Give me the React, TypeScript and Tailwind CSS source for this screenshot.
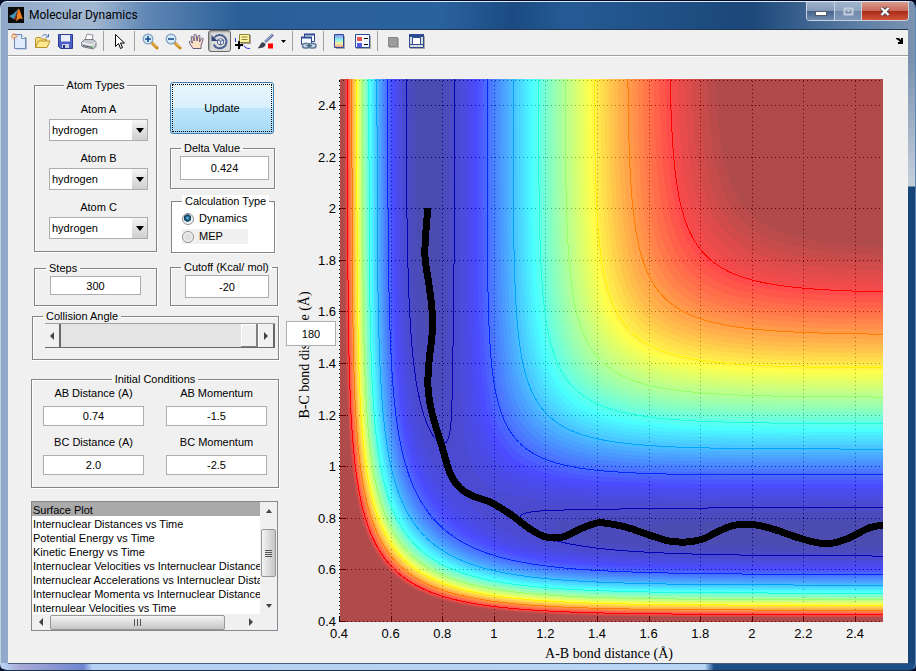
import React, { useMemo } from "react";

/* ---------- potential energy surface (LEPS, collinear H + H2) ---------- */

const DE = 109.4;
const BETA = 1.942;
const RE = 0.7417;
const SATO = 0.185;
const R_MIN = 0.4;
const UNIT = 258;
const SIZE = 543;
const V_LOW = -109.6;
const V_HIGH = -21.5;

function pair(r: number): [number, number] {
  const e = Math.exp(-BETA * (r - RE));
  const e2 = e * e;
  const q = (DE / 4) * ((3 + SATO) * e2 - (2 + 6 * SATO) * e);
  const j = (DE / 4) * ((1 + 3 * SATO) * e2 - (6 + 2 * SATO) * e);
  return [q, j];
}

function energy(ab: number, bc: number): number {
  const [q1, j1] = pair(ab);
  const [q2, j2] = pair(bc);
  const [q3, j3] = pair(ab + bc);
  const root = Math.sqrt(((j1 - j2) ** 2 + (j2 - j3) ** 2 + (j1 - j3) ** 2) / 2);
  return (q1 + q2 + q3 - root) / (1 + SATO);
}

type Pt = [number, number];

/* The surface is symmetric in its two bonds, so only BC >= AB is traced. */
const STEP = 2;
const ROWS: { d: number; v: number[] }[] = [];
for (let d = SIZE + 1; d >= 0; d -= STEP) {
  const v: number[] = [];
  for (let c = 0; c <= d + STEP; c += STEP) {
    v.push(energy(R_MIN + c / UNIT, R_MIN + d / UNIT));
  }
  ROWS.push({ d, v });
}

function trace(level: number): { left: Pt[]; right: Pt[]; closed: boolean } {
  const left: Pt[] = [];
  const right: Pt[] = [];
  let closed = false;
  for (const { d, v } of ROWS) {
    const a = v.findIndex((x) => x < level);
    if (a < 0) {
      closed = left.length > 0 && left[left.length - 1][0] < d - 4;
      break;
    }
    let b = v.length - 1;
    while (b > a && v[b] >= level) b--;
    const lo = a === 0 ? 0 : (a - 1 + (v[a - 1] - level) / (v[a - 1] - v[a])) * STEP;
    const hi = b === v.length - 1 ? d + STEP : (b + (level - v[b]) / (v[b + 1] - v[b])) * STEP;
    if (lo > d + STEP) break;
    left.push([lo, d]);
    right.push([Math.min(hi, d + STEP), d]);
  }
  return { left, right, closed };
}

const upper = ([x, y]: Pt) => `${x.toFixed(1)} ${(SIZE - y).toFixed(1)}`;
const lower = ([x, y]: Pt) => `${y.toFixed(1)} ${(SIZE - x).toFixed(1)}`;

/* The mirrored half runs the other way round so that the halves' overlap stays filled. */
function areaPath(level: number): string {
  const { left, right } = trace(level);
  if (left.length < 2) return "";
  const ring = [...left, ...right.slice().reverse()];
  const mirrored = ring.slice().reverse();
  return `M${ring.map(upper).join("L")}ZM${mirrored.map(lower).join("L")}Z`;
}

function linePath(level: number): string {
  const { left, right, closed } = trace(level);
  const onCanvas = (pts: Pt[]) => pts.filter(([x, y]) => x <= y + 1);
  const lines = closed ? [[...left, ...right.slice().reverse()]] : [onCanvas(left), onCanvas(right)];
  return lines
    .filter((l) => l.length > 1)
    .map((l) => `M${l.map(upper).join("L")}M${l.map(lower).join("L")}`)
    .join("");
}

function jet(i: number): string {
  const u = (j: number) => (j < 1 || j > 47 ? 0 : j <= 16 ? j / 16 : j <= 31 ? 1 : (48 - j) / 16);
  const c = (x: number) => Math.round(x * 255);
  return `rgb(${c(u(i - 24))},${c(u(i - 8))},${c(u(i + 8))})`;
}

const CONTOURS: [number, string][] = [
  [-105.7, "#0000b4"],
  [-95.3, "#0028ff"],
  [-85, "#00a5ff"],
  [-74.6, "#1effe1"],
  [-64.2, "#96ff69"],
  [-53.8, "#fff000"],
  [-43.4, "#ff7d00"],
  [-32.8, "#ff0000"],
];

const TRAJECTORY: Pt[] = [
  [428, 208], [426, 230], [425, 257], [429, 285], [432, 310], [432, 335], [429, 362], [428, 387],
  [432, 413], [441, 443], [450, 473], [460, 488], [473, 496], [490, 502], [510, 514], [530, 529],
  [546, 537], [563, 537], [580, 529], [597, 523], [611, 524], [629, 528], [649, 535], [669, 541],
  [686, 542], [703, 539], [719, 531], [736, 525], [756, 525], [776, 530], [799, 538], [819, 543],
  [833, 543], [849, 538], [869, 528], [884, 525],
];

function smooth(p: Pt[]): string {
  let d = `M${p[0][0]} ${p[0][1]}`;
  for (let i = 0; i < p.length - 1; i++) {
    const a = p[i - 1] ?? p[i];
    const b = p[i];
    const c = p[i + 1];
    const e = p[i + 2] ?? c;
    d += `C${b[0] + (c[0] - a[0]) / 6} ${b[1] + (c[1] - a[1]) / 6} ${c[0] - (e[0] - b[0]) / 6} ${c[1] - (e[1] - b[1]) / 6} ${c[0]} ${c[1]}`;
  }
  return d;
}

const TICKS = ["0.4", "0.6", "0.8", "1", "1.2", "1.4", "1.6", "1.8", "2", "2.2", "2.4"];

function Chart() {
  const bands = useMemo(() => {
    const out: { d: string; fill: string }[] = [];
    for (let i = 62; i >= 1; i--) {
      out.push({ d: areaPath(V_LOW + ((V_HIGH - V_LOW) * i) / 64), fill: jet(i) });
    }
    return out;
  }, []);
  const lines = useMemo(() => CONTOURS.map(([v, stroke]) => ({ d: linePath(v), stroke })), []);
  return (
    <svg viewBox="290 57 618 606" preserveAspectRatio="xMinYMin meet" className="block h-full w-full" role="img" aria-label="Surface Plot">
      <defs>
        <clipPath id="plot">
          <rect x="340" y="79" width="543" height="543" />
        </clipPath>
      </defs>
      <rect x="340" y="79" width="543" height="543" fill="#fff" />
      <g stroke="#000" strokeDasharray="1 3" shapeRendering="crispEdges">
        {TICKS.map((t, i) => {
          const o = Math.round(i * 51.6);
          return (
            <g key={t}>
              <path d={`M${339.5 + o} 622V79`} />
              <path d={`M339 ${621.5 - o}H883`} />
              <path d={`M${339.5 + o} 622v-6M340 ${621.5 - o}h6`} strokeDasharray="none" />
            </g>
          );
        })}
        <path d="M339 80.5H883" />
      </g>
      <g clipPath="url(#plot)">
        <g opacity="0.7">
          <rect x="340" y="79" width="543" height="543" fill={jet(63)} />
          <g transform="translate(340 79)">
            {bands.map((b) => (
              <path key={b.fill} d={b.d} fill={b.fill} />
            ))}
          </g>
        </g>
        <g transform="translate(340 79)" fill="none" shapeRendering="crispEdges">
          {lines.map((l) => (
            <path key={l.stroke} d={l.d} stroke={l.stroke} />
          ))}
        </g>
        <path d={smooth(TRAJECTORY)} fill="none" stroke="#000" strokeWidth="7" shapeRendering="crispEdges" />
      </g>
      <g className="font-['Liberation_Sans',sans-serif] text-[13px]">
        {TICKS.map((t, i) => (
          <text key={t} x={339 + i * 51.6} y="638" textAnchor="middle">{t}</text>
        ))}
        {TICKS.map((t, i) => (
          <text key={t} x="336" y={626 - i * 51.6} textAnchor="end">{t}</text>
        ))}
      </g>
      <g className="font-['Liberation_Serif',serif] text-[14px]">
        <text x="609" y="658" textAnchor="middle">A-B bond distance (Å)</text>
        <text transform="translate(309 355) rotate(-90)" textAnchor="middle">B-C bond distance (Å)</text>
      </g>
    </svg>
  );
}

/* ------------------------------- icons -------------------------------- */

const I = ({ children }: { children: React.ReactNode }) => (
  <svg width="17" height="17" viewBox="0 0 17 17" aria-hidden="true">{children}</svg>
);

const icons: Record<string, React.ReactNode> = {
  "New Figure": (
    <I>
      <path d="M4 4h12v12.500H5z" fill="#b0b8c4" />
      <path d="M3.500 1.500h7l4 4v10h-11z" fill="#dfeafa" stroke="#6a8cc0" />
      <path d="M10.500 1.500v4h4" fill="#fff" stroke="#6a8cc0" />
      <path d="M3 0v6.500M0 3.200h6.500M.9 1l4.400 4.500M5.300 1L.9 5.500" stroke="#e0713b" />
      <circle cx="3.100" cy="3.200" r="1.300" fill="#fff3c0" />
    </I>
  ),
  "Open File": (
    <I>
      <path d="M1.500 14.500v-9l1-1h4l1 1.500h5v3" fill="#f6da7c" stroke="#b9922a" />
      <path d="M1.500 14.500l3-6.500h11.500l-3 6.500z" fill="#ffe98f" stroke="#b9922a" />
      <path d="M8 3.500c1.500-2.500 4.500-2.500 6 0M14.500 1v3h-3" fill="none" stroke="#4b78b8" />
    </I>
  ),
  "Save Figure": (
    <I>
      <path d="M1.500 1.500h14v14h-12l-2-2z" fill="#4b5fc6" stroke="#2c3c92" />
      <path d="M4 2h9v6.500H4z" fill="#e9eefc" />
      <path d="M5 11h7v4H5z" fill="#c9cfe6" />
      <path d="M6 12h2v3H6z" fill="#20307f" />
    </I>
  ),
  "Print Figure": (
    <I>
      <path d="M5 7l2-6 6 1-1 5.500z" fill="#fff" stroke="#8d9299" />
      <path d="M1.500 9.500l3-3h9l2.500 3v4l-3 2.500-11-2.500z" fill="#c6cad0" stroke="#767b83" />
      <path d="M2 10l10 2 3.500-2.500" fill="none" stroke="#fff" />
      <path d="M3 12.500l9 2" stroke="#50545b" />
      <path d="M11 14h2" stroke="#58b058" />
    </I>
  ),
  "Edit Plot": (
    <I>
      <path d="M4.500 1.500v12l3-3 2 5 2-1-2-4.500h4z" fill="#fff" stroke="#000" />
    </I>
  ),
  "Zoom In": (
    <I>
      <path d="M10 10l5 5" stroke="#c98a1c" strokeWidth="3" strokeLinecap="round" />
      <path d="M10.500 10l4 4" stroke="#ffd36b" />
      <circle cx="6" cy="6" r="4.800" fill="#d5ecfa" stroke="#8aa4c6" strokeWidth="1.400" />
      <path d="M6 3v6M3 6h6" stroke="#174a8c" strokeWidth="1.600" />
    </I>
  ),
  "Zoom Out": (
    <I>
      <path d="M10 10l5 5" stroke="#c98a1c" strokeWidth="3" strokeLinecap="round" />
      <path d="M10.500 10l4 4" stroke="#ffd36b" />
      <circle cx="6" cy="6" r="4.800" fill="#d5ecfa" stroke="#8aa4c6" strokeWidth="1.400" />
      <path d="M3 6h6" stroke="#174a8c" strokeWidth="1.600" />
    </I>
  ),
  Pan: (
    <I>
      <path d="M5 15.500L1.500 10c-1-2 1-2.500 2-1l1 1.200L3 4.500c0-1.500 1.700-1.500 2 0L6.200 8 6 2.500c0-1.500 2-1.500 2.200 0L9 8l1-4.800c.3-1.400 2-1.200 1.900.3L11.500 9l1.800-3.300c.7-1.200 2.200-.5 1.700.9L13 12.500v3z" fill="#fce0c4" stroke="#5b4a78" strokeWidth=".9" />
    </I>
  ),
  "Rotate 3D": (
    <I>
      <path d="M3.500 4.500a6.700 6.700 0 1 1-.8 7" fill="none" stroke="#4a5f92" strokeWidth="2" />
      <path d="M.5 2v6h6z" fill="#2f4377" />
      <path d="M6.500 7l3-1.500 3 1.500v3.500l-3 1.500-3-1.500zM6.500 7l3 1.300 3-1.300M9.500 8.300V12" fill="#e8eefb" stroke="#4a5f92" strokeWidth=".9" />
    </I>
  ),
  "Data Cursor": (
    <I>
      <path d="M7 2h10v9H7z" fill="#a0a0a0" />
      <path d="M5.500 1.500h10v8h-10z" fill="#fff6a8" stroke="#8f8331" />
      <path d="M7.500 4h6M7.500 6.500h6" stroke="#8f8331" />
      <path d="M1.500 5v4M3 12c1 1.500 3 1 4 1M10 12.500c1 2.500 3 3 6 3" stroke="#2a3ee8" fill="none" />
      <path d="M5 8v8M1 12h8" stroke="#000" strokeWidth="2" />
    </I>
  ),
  Brush: (
    <I>
      <path d="M16 1.500L8 9" stroke="#5d6da0" strokeWidth="2.600" />
      <path d="M15.500 1.500L8 8.500" stroke="#c9d2ea" strokeWidth=".9" />
      <path d="M.5 15c2-.5 2.500-4.500 5-6l3 1.800c.5 3-4 5-8 4.200z" fill="#3c4254" />
      <path d="M11 10.500h5v5h-5z" fill="#f00" />
    </I>
  ),
  "Link Plot": (
    <I>
      <path d="M4.500 1.500h10v7h-10z" fill="#fff" stroke="#2c4b93" />
      <path d="M4 1.500h11" stroke="#2c4b93" strokeWidth="2" />
      <path d="M1.500 4.500h10v7h-10z" fill="#f3f7ff" stroke="#2c4b93" />
      <path d="M1 4.500h11" stroke="#2c4b93" strokeWidth="2" />
      <rect x="2.500" y="10.500" width="7" height="4.500" rx="2.200" fill="#c9d8e8" stroke="#5e7896" strokeWidth="1.500" />
      <rect x="9" y="10.500" width="7" height="4.500" rx="2.200" fill="#c9d8e8" stroke="#5e7896" strokeWidth="1.500" />
      <path d="M6.500 12.700h5.500" stroke="#40566f" strokeWidth="1.300" />
    </I>
  ),
  "Insert Colorbar": (
    <I>
      <defs>
        <linearGradient id="bar" x2="0" y2="1">
          <stop offset="0" stopColor="#8c8cf0" />
          <stop offset=".4" stopColor="#8ff0f0" />
          <stop offset=".7" stopColor="#f5f0a0" />
          <stop offset="1" stopColor="#f58f8f" />
        </linearGradient>
      </defs>
      <path d="M5 3h9v13H5z" fill="#a9a9a9" />
      <path d="M3.500 1.500h9v13h-9z" fill="url(#bar)" stroke="#2c4b93" />
    </I>
  ),
  "Insert Legend": (
    <I>
      <path d="M2 3h15v13H2z" fill="#a9a9a9" />
      <path d="M1.500 1.500h14v13h-14z" fill="#f6f8ff" stroke="#2c4b93" />
      <path d="M3 4h5v4H3z" fill="#e95555" />
      <path d="M3 10h5v4H3z" fill="#5a5ae6" />
      <path d="M10 5.500h4M10 11.500h4" stroke="#000" />
    </I>
  ),
  "Hide Plot Tools": (
    <I>
      <path d="M4 5h10v10H4z" fill="#b5b5b5" />
      <path d="M3.500 4.500h9v9h-9z" fill="#9c9c9c" stroke="#868686" />
    </I>
  ),
  "Show Plot Tools": (
    <I>
      <path d="M2 3h15v13H2z" fill="#a9a9a9" />
      <path d="M1.500 1.500h14v13h-14z" fill="#dcdcdc" stroke="#2c4b93" />
      <path d="M1 2.500h15" stroke="#2c4b93" strokeWidth="3" />
      <path d="M1 11.500h15" stroke="#2c4b93" />
      <path d="M4.500 4.500h8v7h-8z" fill="#fff" stroke="#2c4b93" />
    </I>
  ),
};

function Tool({ name, pressed }: { name: string; pressed?: boolean }) {
  return (
    <button
      type="button"
      aria-label={name}
      aria-pressed={pressed}
      className={
        pressed
          ? "flex h-[22px] w-[23px] items-center justify-center rounded-[3px] border border-[#6b6b6b] bg-[#dcdcdc] shadow-[inset_1px_1px_2px_#999]"
          : "flex h-[22px] w-[23px] items-center justify-center"
      }
    >
      {icons[name]}
    </button>
  );
}

const Separator = () => <div className="ml-[3px] mr-1 h-5 w-px bg-[#a0a0a0]" />;

function Toolbar() {
  return (
    <div className="flex h-[26px] shrink-0 items-center border-b border-[#a0a0a0] bg-[#f0f0f0] pb-[3px]">
      <Tool name="New Figure" />
      <Tool name="Open File" />
      <Tool name="Save Figure" />
      <Tool name="Print Figure" />
      <Separator />
      <Tool name="Edit Plot" />
      <Separator />
      <Tool name="Zoom In" />
      <Tool name="Zoom Out" />
      <Tool name="Pan" />
      <Tool name="Rotate 3D" pressed />
      <Tool name="Data Cursor" />
      <Tool name="Brush" />
      <button type="button" aria-label="Brush colors" className="flex h-[22px] w-3 items-center justify-center">
        <svg width="5" height="3" viewBox="0 0 5 3" aria-hidden="true"><path d="M0 0h5L2.500 3z" /></svg>
      </button>
      <Separator />
      <Tool name="Link Plot" />
      <Separator />
      <Tool name="Insert Colorbar" />
      <Tool name="Insert Legend" />
      <Separator />
      <Tool name="Hide Plot Tools" />
      <Tool name="Show Plot Tools" />
      <button type="button" aria-label="Dock Figure" className="ml-auto mr-[5px]">
        <svg width="7" height="6" viewBox="0 0 7 6" aria-hidden="true">
          <path d="M0 1V0h3l2 2V0h2v6H2V4h2L2 2z" />
        </svg>
      </button>
    </div>
  );
}

/* ------------------------------ controls ------------------------------ */

function Group({ title, className, legend, children }: { title: string; className: string; legend: string; children: React.ReactNode }) {
  return (
    <fieldset className={`min-w-0 border border-[#848484] shadow-[1px_1px_0_#fff,inset_1px_1px_0_#fff] ${className}`}>
      <legend className={`h-[13px] px-[3px] leading-[13px] ${legend}`}>{title}</legend>
      {children}
    </fieldset>
  );
}

function Field({ label, value, className }: { label: string; value: string; className: string }) {
  return (
    <input
      type="text"
      aria-label={label}
      defaultValue={value}
      className={`block border border-[#abadb3] bg-white p-0 text-center outline-none ${className}`}
    />
  );
}

function Labelled({ label, value }: { label: string; value: string }) {
  return (
    <label className="block w-[101px] text-center leading-[13px]">
      {label}
      <Field label={label} value={value} className="mt-[6px] h-5 w-full" />
    </label>
  );
}

function Atom({ label }: { label: string }) {
  return (
    <label className="block text-center leading-[13px]">
      {label}
      <span className="relative mt-[3px] block h-[22px]">
        <select className="block h-full w-full appearance-none border border-[#abadb3] bg-white px-[2px] text-black outline-none">
          <option>hydrogen</option>
        </select>
        <span className="pointer-events-none absolute right-px top-px flex h-5 w-[15px] items-center justify-center bg-linear-to-b from-[#f5f5f5] to-[#cfcfcf]">
          <svg width="8" height="5" viewBox="0 0 8 5" aria-hidden="true"><path d="M0 0h8L4 5z" /></svg>
        </span>
      </span>
    </label>
  );
}

const Tri = ({ d }: { d: string }) => (
  <svg width="8" height="8" viewBox="0 0 8 8" fill="#444" aria-hidden="true"><path d={d} /></svg>
);
const LEFT = "M6 0v8L2 4z";
const RIGHT = "M2 0v8l4-4z";
const UP = "M1 6h6L4 2z";
const DOWN = "M1 2h6L4 6z";

const PLOTS = [
  "Surface Plot",
  "Internuclear Distances vs Time",
  "Potential Energy vs Time",
  "Kinetic Energy vs Time",
  "Internuclear Velocities vs Internuclear Distance",
  "Internuclear Accelerations vs Internuclear Distance",
  "Internuclear Momenta vs Internuclear Distance",
  "Internulear Velocities vs Time",
];

function PlotList() {
  return (
    <div className="ml-[23px] mt-[13px] grid h-[130px] w-[247px] grid-cols-[1fr_17px] grid-rows-[1fr_16px] border border-[#828790] bg-white">
      <ul role="listbox" aria-label="Plots" className="min-w-0 overflow-hidden whitespace-nowrap">
        {PLOTS.map((p, i) => (
          <li key={p} role="option" aria-selected={i === 0} className={i === 0 ? "h-[14px] bg-[#aaaaaa] px-px leading-[16px]" : "h-[14px] px-px leading-[16px]"}>
            {p}
          </li>
        ))}
      </ul>
      <div className="flex flex-col items-center bg-[#f0f0f0]">
        <button type="button" aria-label="Scroll up" className="flex h-[17px] items-center"><Tri d={UP} /></button>
        <div className="mt-[10px] flex h-12 w-[15px] flex-col items-center justify-center gap-px rounded-[2px] border border-[#979797] bg-linear-to-r from-[#f5f5f5] to-[#c5c5c5]">
          <i className="h-px w-[7px] bg-[#555]" />
          <i className="h-px w-[7px] bg-[#555]" />
          <i className="h-px w-[7px] bg-[#555]" />
          <i className="h-px w-[7px] bg-[#555]" />
        </div>
        <button type="button" aria-label="Scroll down" className="mt-auto flex h-[17px] items-center"><Tri d={DOWN} /></button>
      </div>
      <div className="flex items-center bg-[#f0f0f0]">
        <button type="button" aria-label="Scroll left" className="flex w-[18px] justify-center"><Tri d={LEFT} /></button>
        <div className="flex h-[15px] w-[175px] items-center justify-center gap-[2px] rounded-[2px] border border-[#979797] bg-linear-to-b from-[#f5f5f5] to-[#c5c5c5]">
          <i className="h-[7px] w-px bg-[#555]" />
          <i className="h-[7px] w-px bg-[#555]" />
          <i className="h-[7px] w-px bg-[#555]" />
        </div>
        <button type="button" aria-label="Scroll right" className="ml-auto flex w-[18px] justify-center"><Tri d={RIGHT} /></button>
      </div>
      <div className="bg-[#f0f0f0]" />
    </div>
  );
}

function Radio({ label, checked, className }: { label: string; checked?: boolean; className: string }) {
  return (
    <label className={`flex h-[15px] items-center gap-[5px] ${className}`}>
      <input
        type="radio"
        name="calculation"
        defaultChecked={checked}
        className="m-0 size-3 shrink-0 appearance-none rounded-full border border-[#8e8f8f] bg-[radial-gradient(#dedede_40%,#f8f8f8_70%)] checked:bg-[radial-gradient(circle_at_45%_40%,#7fd0ee_0,#1c5f87_25%,#12405f_42%,#f4f4f4_50%)]"
      />
      {label}
    </label>
  );
}

function Controls() {
  return (
    <div className="w-[282px] shrink-0">
      <div className="flex gap-[13px] pl-[26px] pt-[22px]">
        <div className="w-[123px]">
          <Group title="Atom Types" className="h-[173px]" legend="mx-auto">
            <div className="flex flex-col gap-[11px] pl-[14px] pr-2 pt-[11px]">
              <Atom label="Atom A" />
              <Atom label="Atom B" />
              <Atom label="Atom C" />
            </div>
          </Group>
          <Group title="Steps" className="mt-[10px] h-[44px]" legend="ml-[11px]">
            <Field label="Steps" value="300" className="ml-[15px] mt-px h-[19px] w-[91px]" />
          </Group>
        </div>
        <div className="w-[108px] pt-[3px]">
          <button
            type="button"
            className="flex h-[52px] w-[104px] rounded-[3px] border border-[#3c7fb1] bg-[linear-gradient(#eaf6fd_0,#d9f0fc_50%,#bee6fd_50%,#a7d9f5_100%)] p-px"
          >
            <span className="flex h-full w-full items-center justify-center border border-dotted border-black">Update</span>
          </button>
          <Group title="Delta Value" className="mt-2 h-[47px] w-[105px]" legend="ml-[10px]">
            <Field label="Delta Value" value="0.424" className="ml-[9px] mt-px h-6 w-[89px]" />
          </Group>
          <Group title="Calculation Type" className="mt-[6px] ml-px h-[58px] w-[104px] bg-white" legend="ml-[10px] bg-white">
            <Radio label="Dynamics" checked className="ml-[10px] mt-[3px] w-[80px]" />
            <Radio label="MEP" className="ml-[10px] mt-[3px] w-[66px] bg-[#f0f0f0]" />
          </Group>
          <Group title="Cutoff (Kcal/ mol)" className="mt-2 h-[45px]" legend="ml-[10px]">
            <Field label="Cutoff (Kcal/ mol)" value="-20" className="ml-[14px] mt-px h-[23px] w-[84px]" />
          </Group>
        </div>
      </div>
      <Group title="Collision Angle" className="ml-6 mt-1 h-[50px] w-[247px]" legend="ml-[10px]">
        <div className="ml-3 flex h-[25px] w-[230px] items-stretch border-y border-t-[#a0a0a0] border-b-[#696969] bg-[#e4e4e4]">
          <button type="button" aria-label="Decrease angle" className="flex w-4 items-center justify-center border-r-2 border-[#696969] bg-[#f0f0f0]"><Tri d={LEFT} /></button>
          <input
            type="range"
            aria-label="Collision Angle"
            min="0"
            max="180"
            defaultValue="180"
            className="h-[23px] min-w-0 flex-1 appearance-none bg-[#e4e4e4] [&::-webkit-slider-thumb]:h-[23px] [&::-webkit-slider-thumb]:w-[17px] [&::-webkit-slider-thumb]:appearance-none [&::-webkit-slider-thumb]:bg-[#f0f0f0] [&::-webkit-slider-thumb]:shadow-[inset_-2px_-1px_0_#808080,inset_1px_1px_0_#fff]"
          />
          <button type="button" aria-label="Increase angle" className="flex w-[17px] items-center justify-center border-l border-r-2 border-l-white border-r-[#696969] bg-[#f0f0f0]"><Tri d={RIGHT} /></button>
        </div>
      </Group>
      <Group title="Initial Conditions" className="ml-[23px] mt-[13px] h-[115px] w-[248px]" legend="mx-auto">
        <div className="grid grid-cols-[101px_101px] gap-x-[22px] gap-y-[10px] pl-[11px] pt-px">
          <Labelled label="AB Distance (A)" value="0.74" />
          <Labelled label="AB Momentum" value="-1.5" />
          <Labelled label="BC Distance (A)" value="2.0" />
          <Labelled label="BC Momentum" value="-2.5" />
        </div>
      </Group>
      <PlotList />
    </div>
  );
}

function TitleBar() {
  return (
    <div className="flex h-[27px] shrink-0 items-start">
      <svg width="16" height="16" viewBox="0 0 16 16" className="mt-[5px]" aria-hidden="true">
        <path d="M0 0h16v16H0z" fill="#0b0b0b" />
        <path d="M1 9l4-2 5-5-3 9-2 1z" fill="#3f8fb8" />
        <path d="M5 12l2-1c1.500-3 2-8 3.500-9.500L7.500 13z" fill="#a12b12" />
        <path d="M10.500 1.500c1.500 1 3 7.500 4.500 10.500-3-1.500-4 0-7 2.500 1-4 1-10 2.500-13z" fill="#f08022" />
      </svg>
      <h1 className="ml-[5px] mt-[5px] font-[Roboto,'Open_Sans',sans-serif] text-[12px] font-normal leading-4 text-black">
        Molecular Dynamics
      </h1>
      <div className="ml-auto -mr-px flex h-[19px] overflow-hidden rounded-b-[4px] border border-t-0 border-[#c9d3e0]">
        <button type="button" aria-label="Minimize" className="flex w-7 items-center justify-center border-r border-[#c9d3e0] bg-[linear-gradient(#9fb3cb_0,#8299b8_50%,#44618b_50%,#6f8bb0)]">
          <svg width="12" height="6" viewBox="0 0 12 6" className="mt-[5px]" aria-hidden="true"><rect x=".5" y=".5" width="11" height="4" fill="#fff" stroke="#535b68" /></svg>
        </button>
        <button type="button" aria-label="Maximize" className="flex w-[27px] items-center justify-center border-r border-[#c9d3e0] bg-[linear-gradient(#9fb3cb_0,#8fa5c1_50%,#7089ab_50%,#7f98b8)]">
          <svg width="11" height="9" viewBox="0 0 11 9" aria-hidden="true"><path d="M1.500 1.500h8v6h-8zM4.500 4h2" fill="none" stroke="#c3cedc" strokeWidth="2" /></svg>
        </button>
        <button type="button" aria-label="Close" className="flex w-[46px] items-center justify-center bg-[linear-gradient(#d99a8c_0,#c8685a_50%,#a92a14_50%,#d0543a)]">
          <svg width="12" height="11" viewBox="0 0 12 11" aria-hidden="true">
            <path d="M2.500 2l7 7M9.500 2l-7 7" stroke="#4d3f4a" strokeWidth="4" />
            <path d="M2.500 2l7 7M9.500 2l-7 7" stroke="#fff" strokeWidth="2.400" />
          </svg>
        </button>
      </div>
    </div>
  );
}

export default function App() {
  return (
    <div className="h-screen min-h-[671px] bg-[#030b2b] pt-px">
      <div className="flex h-full flex-col rounded-[7px] border border-b-[#1c2f4a] border-l-[#c3d3e6] border-r-[#5d86b3] border-t-[#dfe9f5] bg-[linear-gradient(90deg,#b9d6f5_0,#a9a9d6_2%,#6f86cf_9%,#b3d0f2_10%,#b9d6f5_77%,#1c4f88_78%,#1c4f88_100%)]">
        <div className="flex min-h-0 flex-1 flex-col rounded-t-[6px] bg-[linear-gradient(90deg,#90a9c8_0,#a3b8d2_10%,#5f86b4_16%,#2a6098_26%,#2a629e_48%,#1b4b82_56%,#255b95_62%,#1b4779_82%,#5e7fa6_94%,#7c93b0_100%)]">
          <div className="flex min-h-0 flex-1 flex-col bg-[linear-gradient(transparent_0,transparent_60px,#c3cedb_180px,#c3cedb_184px,#17457a_185px)] bg-right [background-size:7px_100%] bg-no-repeat px-[7px]">
            <TitleBar />
            <div className="flex min-h-0 flex-1 flex-col border-t border-[#22384f] bg-[#f0f0f0] font-['Liberation_Sans',Arial,sans-serif] text-[11px] text-black">
              <Toolbar />
              <div className="relative flex min-h-0 flex-1 border-t border-white">
                <Controls />
                <div className="min-w-0 flex-1">
                  <Chart />
                </div>
                <Field label="Collision angle value" value="180" className="absolute left-[278px] top-[264px] h-[25px] w-[50px]" />
              </div>
            </div>
          </div>
        </div>
        <div className="mx-[7px] h-[7px] shrink-0 border-t border-[#4a5f7c]" />
      </div>
    </div>
  );
}
